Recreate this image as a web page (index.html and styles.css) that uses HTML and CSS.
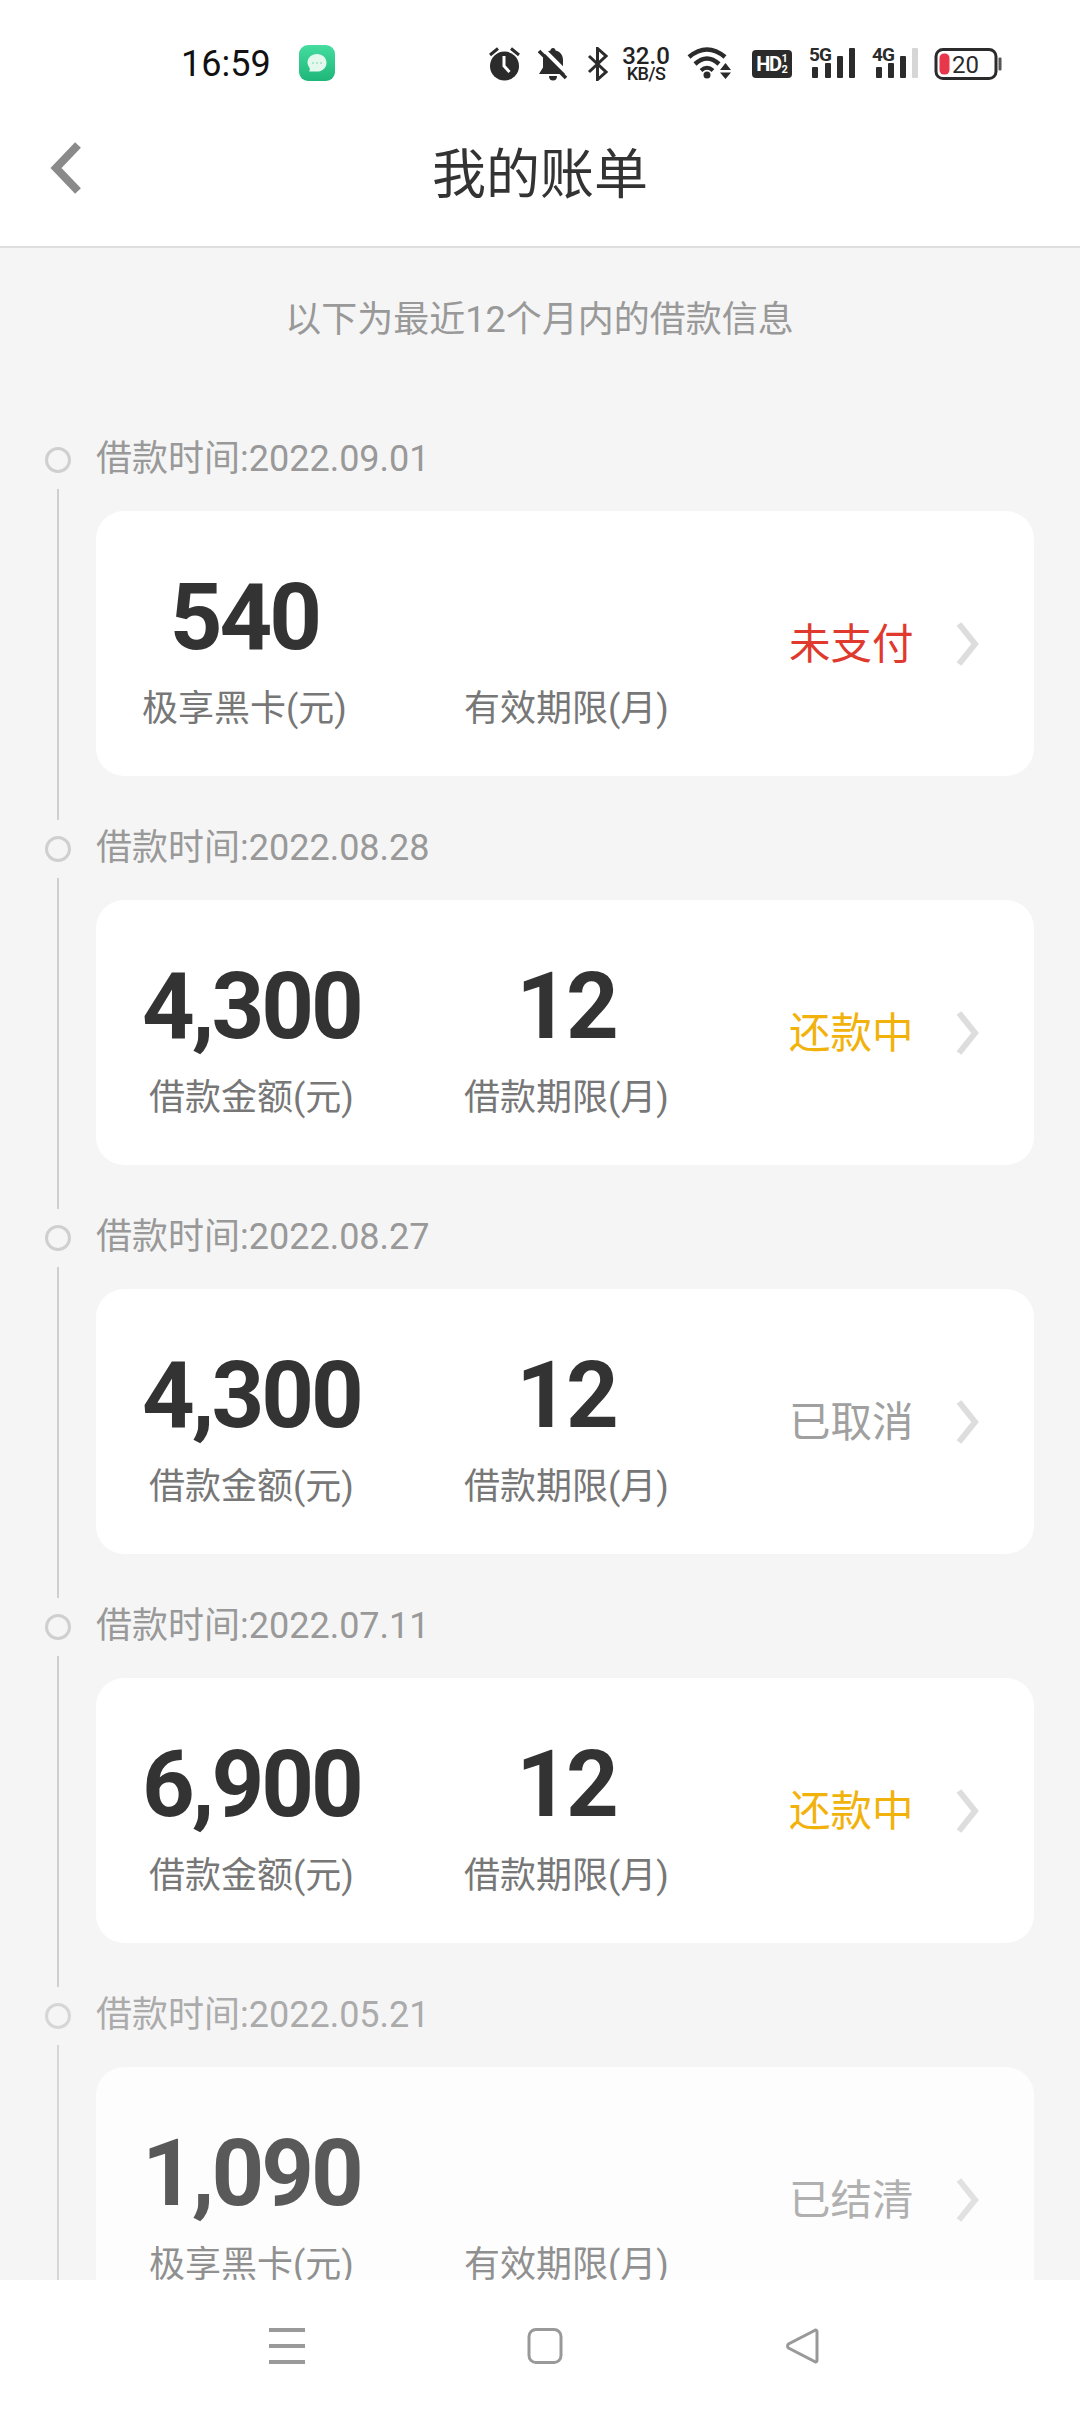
FILE: index.html
```html
<!DOCTYPE html>
<html lang="zh-CN">
<head>
  <meta charset="UTF-8">
  <meta name="viewport" content="width=device-width, initial-scale=1.0">
  <title>我的账单</title>
  <link rel="stylesheet" href="styles.css">
</head>
<body>
  <div class="page">
    <header class="top">
      <div class="statusbar">
        <span class="clock">16:59</span>
        <span class="app-icon">
          <svg width="36" height="36" viewBox="0 0 36 36"><defs><linearGradient id="appg" x1="0" y1="0" x2="0" y2="1"><stop offset="0" stop-color="#45dca0"/><stop offset="1" stop-color="#1fb67a"/></linearGradient></defs><rect width="36" height="36" rx="9" fill="url(#appg)"/><path d="M18 9c5.500 0 9.500 3.800 9.500 8.800s-4 8.800-9.500 8.800h-8c.8-1 1-2.500.6-3.600C9.400 21 8.500 19.500 8.500 17.800 8.500 12.800 12.500 9 18 9z" fill="#e4f8ee"/><circle cx="14" cy="18" r="1" fill="#a5dfc5"/><circle cx="18" cy="18" r="1" fill="#a5dfc5"/><circle cx="22" cy="18" r="1" fill="#a5dfc5"/></svg>
        </span>
        <div class="status-icons">
          <svg class="ic-alarm" width="32" height="34" viewBox="0 0 32 34"><circle cx="15.500" cy="19" r="14.500" fill="#2b2b2b"/><path d="M15 9v10l5.500 6" fill="none" stroke="#fff" stroke-width="3"/><path d="M1 8l8-6.500M30 8l-8-6.500" stroke="#2b2b2b" stroke-width="3" fill="none"/></svg>
          <svg class="ic-bell" width="31" height="34" viewBox="0 0 31 34"><path d="M15 1c1.500 0 2.500 1 2.500 2.500 5 1.200 7.500 5 7.500 9.500v7.500l4 6.500H1l4-6.500V13c0-4.500 2.500-8.300 7.500-9.500C12.500 2 13.500 1 15 1z" fill="#2b2b2b"/><path d="M11 29h8c0 3-1.500 4.500-4 4.500S11 32 11 29z" fill="#2b2b2b"/><path d="M4 1l27 27" stroke="#fff" stroke-width="4"/><path d="M1 4l27 27" stroke="#2b2b2b" stroke-width="3.500"/></svg>
          <svg class="ic-bt" width="21" height="34" viewBox="0 0 21 34"><path d="M2 9l17 16-8.500 7.500V1.500L19 9 2 25" fill="none" stroke="#2b2b2b" stroke-width="3"/></svg>
          <div class="speed"><span class="speed-num">32.0</span><span class="speed-unit">KB/S</span></div>
          <svg class="ic-wifi" width="46" height="34" viewBox="0 0 46 34"><path d="M2 10Q20-5 38 10" fill="none" stroke="#2b2b2b" stroke-width="4.500"/><path d="M8 17Q20 6 32 17" fill="none" stroke="#2b2b2b" stroke-width="4.500"/><path d="M14 23.500Q20 18 26 23.500" fill="none" stroke="#2b2b2b" stroke-width="4"/><circle cx="20" cy="28" r="3.500" fill="#2b2b2b"/><path d="M33 23h11l-5.500-7zM33 25.500h11l-5.500 6.500z" fill="#2b2b2b"/></svg>
          <div class="hd"><span class="hd-txt">HD</span><span class="hd-frac"><i>1</i><i>2</i></span></div>
          <div class="sig">
            <span class="sig-txt">5G</span>
            <svg width="46" height="34" viewBox="0 0 46 34"><rect x="3" y="20" width="6" height="11" rx="1" fill="#2b2b2b"/><rect x="16" y="16" width="6" height="15" rx="1" fill="#2b2b2b"/><rect x="28" y="9" width="6" height="22" rx="1" fill="#2b2b2b"/><rect x="40" y="1" width="6" height="30" rx="1" fill="#2b2b2b"/></svg>
          </div>
          <div class="sig">
            <span class="sig-txt">4G</span>
            <svg width="46" height="34" viewBox="0 0 46 34"><rect x="4" y="20" width="6" height="11" rx="1" fill="#2b2b2b"/><rect x="16" y="16" width="6" height="15" rx="1" fill="#2b2b2b"/><rect x="28" y="9" width="6" height="22" rx="1" fill="#2b2b2b"/><rect x="40" y="1" width="6" height="30" rx="1" fill="#d6d6d6"/></svg>
          </div>
          <svg class="ic-batt" width="68" height="32" viewBox="0 0 68 32"><rect x="2" y="1.500" width="60" height="29" rx="7" fill="none" stroke="#2b2b2b" stroke-width="3"/><rect x="5.500" y="5.500" width="10" height="21" rx="4.500" fill="#e8374a"/><text x="18" y="24.500" class="batt-txt">20</text><rect x="64.500" y="9.500" width="3" height="13" rx="1" fill="#555"/></svg>
        </div>
      </div>
      <div class="navbar">
        <svg class="back" width="32" height="52" viewBox="0 0 32 52"><path d="M28 3L6 26l22 23" fill="none" stroke="#8a8a8a" stroke-width="8"/></svg>
        <h1>我的账单</h1>
      </div>
    </header>

    <main class="content">
      <p class="hint">以下为最近12个月内的借款信息</p>

      <div class="item">
        <div class="rail"><span class="dot"></span><span class="line"></span></div>
        <div class="body">
          <div class="date">借款时间:2022.09.01</div>
          <div class="card">
            <div class="figures">
              <div class="fig-a"><div class="num">540</div><div class="label">极享黑卡(元)</div></div>
              <div class="fig-b"><div class="num"></div><div class="label">有效期限(月)</div></div>
            </div>
            <div class="status red">未支付</div>
            <svg class="arrow" width="24" height="46" viewBox="0 0 24 46"><path d="M4 3l16 20L4 43" fill="none" stroke="#dddddd" stroke-width="6"/></svg>
          </div>
        </div>
      </div>

      <div class="item">
        <div class="rail"><span class="dot"></span><span class="line"></span></div>
        <div class="body">
          <div class="date">借款时间:2022.08.28</div>
          <div class="card">
            <div class="figures">
              <div class="fig-a"><div class="num">4,300</div><div class="label">借款金额(元)</div></div>
              <div class="fig-b"><div class="num">12</div><div class="label">借款期限(月)</div></div>
            </div>
            <div class="status yellow">还款中</div>
            <svg class="arrow" width="24" height="46" viewBox="0 0 24 46"><path d="M4 3l16 20L4 43" fill="none" stroke="#dddddd" stroke-width="6"/></svg>
          </div>
        </div>
      </div>

      <div class="item">
        <div class="rail"><span class="dot"></span><span class="line"></span></div>
        <div class="body">
          <div class="date">借款时间:2022.08.27</div>
          <div class="card">
            <div class="figures">
              <div class="fig-a"><div class="num">4,300</div><div class="label">借款金额(元)</div></div>
              <div class="fig-b"><div class="num">12</div><div class="label">借款期限(月)</div></div>
            </div>
            <div class="status gray">已取消</div>
            <svg class="arrow" width="24" height="46" viewBox="0 0 24 46"><path d="M4 3l16 20L4 43" fill="none" stroke="#dddddd" stroke-width="6"/></svg>
          </div>
        </div>
      </div>

      <div class="item">
        <div class="rail"><span class="dot"></span><span class="line"></span></div>
        <div class="body">
          <div class="date">借款时间:2022.07.11</div>
          <div class="card">
            <div class="figures">
              <div class="fig-a"><div class="num">6,900</div><div class="label">借款金额(元)</div></div>
              <div class="fig-b"><div class="num">12</div><div class="label">借款期限(月)</div></div>
            </div>
            <div class="status yellow">还款中</div>
            <svg class="arrow" width="24" height="46" viewBox="0 0 24 46"><path d="M4 3l16 20L4 43" fill="none" stroke="#dddddd" stroke-width="6"/></svg>
          </div>
        </div>
      </div>

      <div class="item faded">
        <div class="rail"><span class="dot"></span><span class="line"></span></div>
        <div class="body">
          <div class="date">借款时间:2022.05.21</div>
          <div class="card">
            <div class="figures">
              <div class="fig-a"><div class="num">1,090</div><div class="label">极享黑卡(元)</div></div>
              <div class="fig-b"><div class="num"></div><div class="label">有效期限(月)</div></div>
            </div>
            <div class="status gray">已结清</div>
            <svg class="arrow" width="24" height="46" viewBox="0 0 24 46"><path d="M4 3l16 20L4 43" fill="none" stroke="#dddddd" stroke-width="6"/></svg>
          </div>
        </div>
      </div>
    </main>

    <nav class="bottom">
      <svg width="36" height="36" viewBox="0 0 36 36"><path d="M0 2h36M0 18h36M0 34h36" stroke="#999" stroke-width="4"/></svg>
      <svg width="36" height="36" viewBox="0 0 36 36"><rect x="2" y="1.500" width="32" height="33" rx="7" fill="none" stroke="#999" stroke-width="3"/></svg>
      <svg width="36" height="36" viewBox="0 0 36 36"><path d="M32 3.500v29c0 1.500-1.500 2-2.500 1L3.500 20c-1.300-1-1.300-3 0-4L29.500 2.500c1-1 2.500-.5 2.500 1z" fill="none" stroke="#999" stroke-width="3"/></svg>
    </nav>
  </div>
</body>
</html>
```

FILE: styles.css
```css
* {
  box-sizing: border-box;
}
body {
  margin: 0;
  font-family: 'Roboto', 'Noto Sans CJK SC', sans-serif;
  background-color: #f5f5f5;
}
.page {
  width: 1080px;
  height: 2412px;
  display: flex;
  flex-direction: column;
  overflow: hidden;
}
.top {
  background-color: #fff;
  border-bottom: 2px solid #dedede;
  height: 248px;
  flex-shrink: 0;
}
.statusbar {
  height: 110px;
  padding: 34px 0 0 181px;
  display: flex;
  align-items: flex-start;
}
.clock {
  font-size: 36px;
  line-height: 60px;
  height: 60px;
  color: #111;
  width: 118px;
}
.app-icon {
  margin-top: 11px;
  width: 36px;
  height: 36px;
}
.status-icons {
  margin-left: 154px;
  margin-top: 13px;
  display: flex;
  align-items: center;
  height: 34px;
}
.ic-bell {
  margin-left: 17px;
}
.ic-bt {
  margin-left: 18px;
}
.speed {
  margin-left: 14px;
  width: 48px;
  display: flex;
  flex-direction: column;
  align-items: center;
  color: #222;
}
.speed-num {
  font-size: 24px;
  line-height: 19px;
  font-weight: 500;
}
.speed-unit {
  font-size: 18px;
  line-height: 15px;
  font-weight: 500;
  letter-spacing: -0.5px;
}
.ic-wifi {
  margin-left: 17px;
}
.hd {
  margin-left: 19px;
  width: 40px;
  height: 28px;
  background-color: #2b2b2b;
  border-radius: 4px;
  color: #fff;
  display: flex;
  align-items: center;
  justify-content: center;
  gap: 1px;
}
.hd-txt {
  font-size: 20px;
  font-weight: 700;
  letter-spacing: -1.5px;
}
.hd-frac {
  display: flex;
  flex-direction: column;
  font-size: 11px;
  line-height: 11px;
  font-weight: 700;
}
.hd-frac i {
  font-style: normal;
}
.sig {
  margin-left: 17px;
  width: 46px;
  height: 34px;
  position: relative;
}
.sig svg {
  display: block;
}
.sig-txt {
  position: absolute;
  left: 0;
  top: -1px;
  font-size: 19px;
  line-height: 18px;
  font-weight: 700;
  letter-spacing: -1px;
  color: #2b2b2b;
}
.batt-txt {
  font-family: 'Roboto', sans-serif;
  font-size: 24px;
  fill: #2b2b2b;
}
.ic-batt {
  margin-left: 16px;
}
.navbar {
  height: 136px;
  display: flex;
  align-items: center;
  justify-content: center;
  position: relative;
}
.back {
  position: absolute;
  left: 50px;
  top: 32px;
}
.navbar h1 {
  margin: 0 0 16px;
  font-size: 54px;
  font-weight: 400;
  color: #333;
}
.content {
  flex: 1;
  overflow: hidden;
  padding: 48px 46px 0 45px;
}
.hint {
  margin: 0 0 91px;
  font-size: 36px;
  line-height: 48px;
  color: #999;
  text-align: center;
}
.item {
  display: flex;
  gap: 25px;
}
.faded {
  opacity: 0.8;
}
.rail {
  width: 26px;
  padding: 12px 0 4px;
  display: flex;
  flex-direction: column;
  align-items: center;
  flex-shrink: 0;
}
.dot {
  width: 26px;
  height: 26px;
  border: 3px solid #cfcfcf;
  border-radius: 50%;
}
.line {
  flex: 1;
  width: 2px;
  margin-top: 16px;
  background-color: #cfcfcf;
}
.body {
  flex: 1;
  padding-bottom: 48px;
}
.date {
  font-size: 36px;
  line-height: 48px;
  color: #999;
}
.card {
  margin-top: 28px;
  height: 265px;
  padding: 0 55px 0 46px;
  background-color: #fff;
  border-radius: 28px;
  display: flex;
  align-items: center;
}
.figures {
  flex: 1;
  display: flex;
  padding-top: 57px;
  align-self: flex-start;
}
.fig-a {
  width: 322px;
  display: grid;
  justify-items: center;
  justify-content: start;
}
.fig-b {
  width: 204px;
  text-align: center;
}
.num {
  height: 100px;
  line-height: 100px;
  font-size: 92px;
  font-weight: 700;
  letter-spacing: -3px;
  color: #333;
  white-space: nowrap;
}
.label {
  margin-top: 16px;
  font-size: 36px;
  line-height: 50px;
  color: #777;
  white-space: nowrap;
}
.status {
  font-size: 41.500px;
  line-height: 56px;
  width: 126px;
  margin: 3px 40px 0 0;
  white-space: nowrap;
}
.red {
  color: #e0392e;
}
.yellow {
  color: #f2b20c;
}
.gray {
  color: #a0a0a0;
}
.bottom {
  height: 132px;
  flex-shrink: 0;
  background-color: #fff;
  display: flex;
  align-items: center;
  justify-content: center;
  gap: 222px;
  padding-left: 10px;
}
```
